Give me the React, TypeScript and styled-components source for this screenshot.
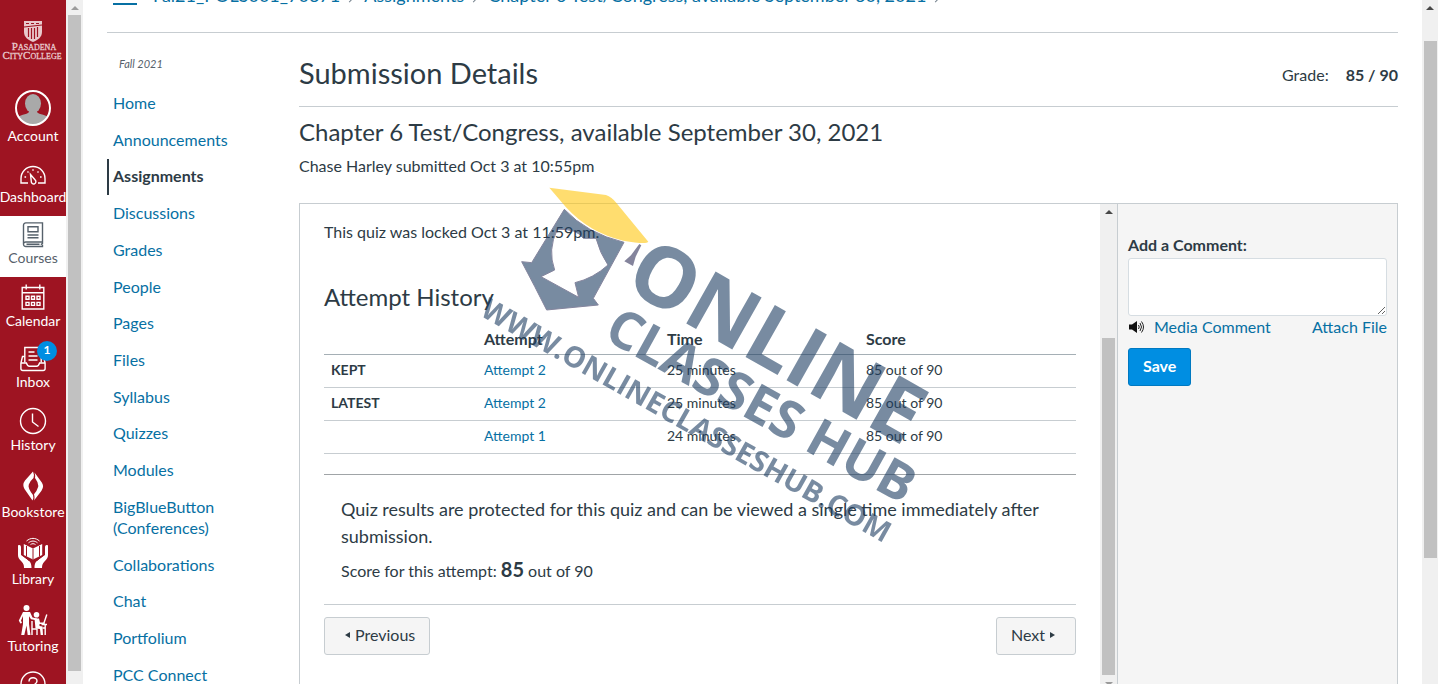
import React from 'react';
import styled, { createGlobalStyle, css } from 'styled-components';

const ink = '#2d3b45';
const link = '#0770a3';
const rule = '#c7cdd1';
const crimson = '#9e1422';

const GlobalStyle = createGlobalStyle`
  *, *::before, *::after { box-sizing: border-box; }
  body {
    margin: 0;
    background: #fff;
    color: ${ink};
    font-family: Lato, "Open Sans", sans-serif;
    font-size: 16px;
    line-height: 24px;
  }
  h1, h2, h3, p { margin: 0; font-weight: 400; }
  a { color: ${link}; text-decoration: none; }
`;

const Page = styled.div`
  position: relative;
  display: flex;
  height: 100vh;
  overflow: hidden;
`;

/* ---------- Scrollbar ---------- */

const Track = styled.div<{ $width: number }>`
  display: flex;
  flex: none;
  flex-direction: column;
  width: ${(p) => p.$width}px;
  background: #f0f0f0;
`;
const ArrowBox = styled.div<{ $down?: boolean; $dim?: boolean }>`
  display: flex;
  flex: none;
  align-items: center;
  justify-content: center;
  height: 15px;
  svg {
    fill: ${(p) => (p.$dim ? '#9b9b9b' : '#484848')};
    ${(p) => p.$down && 'rotate: 180deg;'}
  }
`;
const Gap = styled.div<{ $grow: number }>`
  flex: ${(p) => p.$grow} 1 0;
`;
const Thumb = styled(Gap)`
  width: 13px;
  margin-left: 2px;
  background: #c1c1c1;
`;

type ScrollbarProps = {
  before: number; thumb: number; after: number; width?: number; dim?: boolean; down?: boolean;
};

function Scrollbar({ before, thumb, after, width = 17, dim, down }: ScrollbarProps) {
  const arrow = (
    <svg width="8" height="4" viewBox="0 0 8 4" aria-hidden="true">
      <path d="M4 0 8 4H0Z" />
    </svg>
  );
  return (
    <Track $width={width} aria-hidden="true">
      <ArrowBox $dim={dim}>{arrow}</ArrowBox>
      <Gap $grow={before} />
      <Thumb $grow={thumb} />
      <Gap $grow={after} />
      {down && <ArrowBox $down $dim>{arrow}</ArrowBox>}
    </Track>
  );
}

/* ---------- Global navigation ---------- */

const GlobalNav = styled.nav`
  flex: none;
  width: 66px;
  background: ${crimson};
  overflow: hidden;
`;
const LogoLink = styled.a`
  display: block;
  height: 84px;
  padding-top: 18px;
  svg { display: block; fill: #e9c9cc; }
`;
const NavItem = styled.a<{ $active?: boolean }>`
  display: flex;
  flex-direction: column;
  align-items: center;
  padding: 6px 0 9px;
  color: ${(p) => (p.$active ? '#56616b' : '#fff')};
  background: ${(p) => (p.$active ? '#fff' : 'transparent')};
  font-size: 14px;
  line-height: 20px;
  white-space: nowrap;
`;
const IconSlot = styled.span<{ $height: number }>`
  position: relative;
  display: flex;
  align-items: center;
  justify-content: center;
  height: ${(p) => p.$height}px;
`;
const Badge = styled.span`
  position: absolute;
  top: -5px;
  right: -11px;
  width: 20px;
  height: 20px;
  border-radius: 50%;
  background: #008ee2;
  color: #fff;
  font-size: 12px;
  font-weight: 700;
  line-height: 18px;
  text-align: center;
`;

const lineIcon = { fill: 'none', stroke: 'currentColor', strokeWidth: 1.4 } as const;

const AccountIcon = () => (
  <svg width="36" height="36" viewBox="0 0 36 36">
    <clipPath id="avatar"><circle cx="18" cy="18" r="17" /></clipPath>
    <g clipPath="url(#avatar)" fill="#a9a9a9">
      <ellipse cx="18" cy="13.500" rx="8" ry="9.500" />
      <path d="M14 19h8v3c2 3 10 2 13 7v7H1v-7c3-5 11-4 13-7Z" />
    </g>
    <circle cx="18" cy="18" r="17" fill="none" stroke="#fff" strokeWidth="2" />
  </svg>
);
const DashboardIcon = () => (
  <svg width="26" height="26" viewBox="0 0 26 26" {...lineIcon}>
    <path d="M8 22H1v-4.500a12 12 0 0 1 24 0V22h-7" />
    <path d="m10.500 13.500 4.700 5.500a2.300 2.300 0 1 1-3.900 1.500Z" />
    <path d="M13 8.200v1.600M7.500 10.500l1 1M18.500 10.500l-1 1M4.500 16h1.600M20 16h1.600" />
  </svg>
);
const CoursesIcon = () => (
  <svg width="22" height="26" viewBox="0 0 22 26" {...lineIcon}>
    <path d="M4 .900h16.500V20H4a2.300 2.300 0 0 0-2.500 2.300V3.200A2.300 2.300 0 0 1 4 .900ZM1.500 22.300A2.300 2.300 0 0 0 4 24.500h16.500V23l-1-.800 1-.800V20M4.500 22.300h13" />
    <path d="M6 4.800h10v5H6zM5.500 13h11M5.500 15.800h11" />
  </svg>
);
const CalendarIcon = () => (
  <svg width="24" height="28" viewBox="0 0 24 28" {...lineIcon}>
    <path d="M1.200 4.500h21.600V26H1.200zM1.200 9.800h21.600M5.200 1.500v5M18.800 1.500v5" />
    <path d="M5 13.200h3v3H5zM10.500 13.200h3v3h-3zM16 13.200h3v3h-3zM5 19.400h3v3H5zM10.500 19.400h3v3h-3zM16 19.400h3v3h-3z" />
  </svg>
);
const InboxIcon = () => (
  <svg width="26" height="26" viewBox="0 0 26 26" {...lineIcon}>
    <path d="M4.800 16.500V1.500h16.400v15" />
    <path d="M4.800 10.500H2.500L.900 17v5.500c0 1 .800 2 2 2h20.200c1.200 0 2-1 2-2V17l-1.600-6.500h-2.300M.900 17h5.500c.600 2 1.500 3.200 3 3.200h7.200c1.500 0 2.400-1.200 3-3.200h5.500" />
    <path d="M8.500 6h6M8.500 10h9M8.500 14h9" />
  </svg>
);
const HistoryIcon = () => (
  <svg width="28" height="28" viewBox="0 0 28 28" {...lineIcon}>
    <circle cx="14" cy="14" r="12.500" />
    <path d="M13.500 6.500V15l6 4.500" />
  </svg>
);
const BookstoreIcon = () => (
  <svg width="22" height="32" viewBox="0 0 22 32" fill="#fff">
    <path d="M11 1.500 3 10.500Q0 14.500 2.500 19L10.500 30.500Q12 28 11 25 5.500 18 6.800 14.500 8 11 11.500 8 12.500 4.500 11 1.500Z" />
    <path d="M12.500 2.500Q13.500 5 13 8 16.800 13 16.200 16.800 15 21 12 24.200 13 28 12 30.500L19.500 20.800Q22.500 16.500 19.800 12.500Z" />
  </svg>
);
const LibraryIcon = () => (
  <svg width="32" height="32" viewBox="0 0 32 32">
    <g fill="#fff">
      <path d="M16 11.500 6.800 7v11L16 22.500 25.200 18V7Z" />
      <path d="M1 8.500c2-1 3 0 3 2v7.500l6.500 4.500c3 2.500 4 4 4 8.500H7c0-3-.500-4.500-2.500-6.500C2 22 1 20.500 1 18Z" />
      <path d="M31 8.500c-2-1-3 0-3 2v7.500l-6.500 4.500c-3 2.500-4 4-4 8.500H25c0-3 .500-4.500 2.500-6.500C30 22 31 20.500 31 18Z" />
    </g>
    <path d="M16 11.500v11M9.500 9v10.500M22.500 9v10.500M4.500 17.500l7.500 6M27.500 17.500l-7.500 6" stroke={crimson} fill="none" />
    <path d="M9.500 4c4-3.500 9-3.500 13 0M11.500 5.800c3-2.300 6-2.300 9 0M13.500 7.600c1.500-1.200 3.500-1.200 5 0" stroke="#fff" strokeWidth="1" fill="none" />
  </svg>
);
const TutoringIcon = () => (
  <svg width="30" height="32" viewBox="0 0 30 32" fill="#fff">
    <circle cx="8.500" cy="4" r="3" />
    <path d="M5 8h7l2.500 5.500 4.500 1-.500 1.700-5.500-1-2-3V20l1.500 11H9.700L8.500 21.500 6.300 31H3.200L5 20v-8l-2 4.500 1 2.500-1.700.500L.800 16.500Z" />
    <circle cx="18.500" cy="10.800" r="2.800" />
    <path d="M16.500 14.500h4.500l1 4h4.500V20h-5v2l3 .500.500 8.500h-2.300l-.700-6-4.500-.500Z" />
    <path d="M14 17v8h5v6M14 25v6M23.500 20.500h5.500M27.200 20.500V31M24.500 24h3M25.800 19.500l3-9" stroke="#fff" strokeWidth="1.400" fill="none" />
  </svg>
);
const HelpIcon = () => (
  <svg width="26" height="26" viewBox="0 0 26 26" {...lineIcon}>
    <circle cx="13" cy="13" r="12" />
    <path d="M9 10.500C9 5.500 17 5.500 17 10c0 3-4 3-4 6.500M13 18.500v1.500" />
  </svg>
);

const globalItems = [
  { label: 'Account', height: 36, icon: <AccountIcon /> },
  { label: 'Dashboard', height: 26, icon: <DashboardIcon /> },
  { label: 'Courses', height: 26, icon: <CoursesIcon />, active: true },
  { label: 'Calendar', height: 28, icon: <CalendarIcon /> },
  { label: 'Inbox', height: 26, icon: <InboxIcon />, badge: 1 },
  { label: 'History', height: 28, icon: <HistoryIcon /> },
  { label: 'Bookstore', height: 32, icon: <BookstoreIcon /> },
  { label: 'Library', height: 32, icon: <LibraryIcon /> },
  { label: 'Tutoring', height: 32, icon: <TutoringIcon /> },
  { label: 'Help', height: 26, icon: <HelpIcon /> },
];

const CollegeLogo = () => (
  <svg width="66" height="46" viewBox="0 0 66 46" fontFamily="'Liberation Serif', serif">
    <path d="M24 3h18v11c0 5-4 8-9 10-5-2-9-5-9-10Z" />
    <path d="M24 9l18-2M28.500 10v9M31.500 10v11M34.500 10v11M37.500 9v10M26 5.500h3M31 5.500h3M36 5.500h3" stroke={crimson} strokeWidth="1.200" />
    <g stroke="#e9c9cc" strokeWidth="0.3">
      <text x="34" y="32" textAnchor="middle" fontSize="8"><tspan fontSize="11">P</tspan>ASADENA</text>
      <text x="32" y="41" textAnchor="middle" fontSize="8"><tspan fontSize="11">C</tspan>ITY<tspan fontSize="11">C</tspan>OLLEGE</text>
    </g>
  </svg>
);

/* ---------- Course area ---------- */

const Main = styled.main`
  display: flex;
  flex: 1;
  flex-direction: column;
  min-width: 0;
  padding: 0 24px;
`;
const Breadcrumbs = styled.nav`
  display: flex;
  flex: none;
  align-items: center;
  height: 73px;
  margin-top: -40px;
  padding: 0 6px 2px;
  border-bottom: 1px solid ${rule};
  font-size: 18px;
  white-space: nowrap;
`;
const MenuButton = styled.button`
  width: 24px;
  height: 20px;
  margin-right: 16px;
  padding: 0;
  border: solid #0770a3;
  border-width: 2px 0;
  background: none;
`;
const Chevron = styled.span`
  width: 7px;
  height: 7px;
  margin: 4px 11px 0 6px;
  border: solid #73818c;
  border-width: 1px 1px 0 0;
  rotate: 45deg;
`;
const Columns = styled.div`
  display: flex;
  flex: 1;
  min-height: 0;
`;
const CourseNav = styled.nav`
  flex: none;
  width: 192px;
`;
const Term = styled.p`
  padding: 21px 12px 12px;
  color: #56616b;
  font-size: 11px;
  font-style: italic;
  line-height: 20px;
`;
const CourseLinks = styled.ul`
  display: flex;
  flex-direction: column;
  justify-content: space-between;
  height: 608px;
  margin: 0;
  padding: 0;
  list-style: none;
`;
const CourseLink = styled.a<{ $active?: boolean }>`
  display: block;
  width: 144px;
  padding: 6px 0 9px 6px;
  line-height: 21px;
  ${(p) => p.$active && css`
    padding-left: 4px;
    border-left: 2px solid ${ink};
    color: ${ink};
    font-weight: 700;
  `}
`;
const courseLinks = [
  'Home', 'Announcements', 'Assignments', 'Discussions', 'Grades', 'People', 'Pages', 'Files', 'Syllabus',
  'Quizzes', 'Modules', 'BigBlueButton (Conferences)', 'Collaborations', 'Chat', 'Portfolium', 'PCC Connect',
];

const Content = styled.div`
  display: flex;
  flex: 1;
  flex-direction: column;
  min-width: 0;
`;
const TitleRow = styled.header`
  display: flex;
  align-items: flex-end;
  justify-content: space-between;
  padding: 22px 0 15px;
  border-bottom: 1px solid ${rule};
`;
const Title = styled.h1`
  font-size: 29px;
  line-height: 36px;
`;
const Grade = styled.div`
  display: flex;
  gap: 17px;
  padding-bottom: 4px;
`;
const Heading = styled.h2`
  font-size: 24px;
  line-height: 30px;
`;
const Intro = styled.section`
  display: flex;
  flex-direction: column;
  gap: 7px;
  padding: 10px 0 25px;
`;
const Panel = styled.section`
  display: flex;
  flex: 1;
  min-height: 0;
  margin-bottom: -8px;
  border: 1px solid ${rule};
`;
const Preview = styled.div`
  flex: 1;
  min-width: 0;
  padding: 16px 24px;
`;
const HistoryHeading = styled(Heading)`
  margin-top: 38px;
`;
const AttemptTable = styled.table`
  width: 100%;
  margin-top: 12px;
  border-collapse: collapse;
  table-layout: fixed;
  font-size: 14px;
  line-height: 20px;
  text-align: left;
  th, td { height: 33px; padding: 0 7px 2px; border-bottom: 1px solid ${rule}; }
  thead th { height: 30px; padding-bottom: 0; border-color: #a5afb5; font-size: 16px; }
`;
const Column = styled.col<{ $width?: number }>`
  ${(p) => p.$width && `width: ${p.$width}px;`}
`;
const Results = styled.div`
  margin-top: 20px;
  padding: 21px 17px;
  border-top: 1px solid #a0a4a7;
  border-bottom: 1px solid ${rule};
`;
const Notice = styled.p`
  font-size: 18px;
  line-height: 27px;
`;
const Score = styled.p`
  margin-top: 7px;
  strong { font-size: 20px; }
`;
const Pager = styled.div`
  display: flex;
  justify-content: space-between;
  padding-top: 12px;
`;
const Button = styled.button<{ $primary?: boolean }>`
  display: inline-flex;
  align-items: center;
  gap: 5px;
  height: 38px;
  padding: 0 14px 2px;
  border: 1px solid ${(p) => (p.$primary ? '#0079c1' : rule)};
  border-radius: 3px;
  background: ${(p) => (p.$primary ? '#008ee2' : '#f5f5f5')};
  color: ${(p) => (p.$primary ? '#fff' : ink)};
  font: inherit;
  font-weight: ${(p) => (p.$primary ? 700 : 400)};
`;
const PreviousButton = styled(Button)`
  padding-left: 20px;
`;
const NextButton = styled(Button)`
  padding-right: 20px;
`;

const CommentPane = styled.form`
  display: flex;
  flex: none;
  flex-direction: column;
  align-items: flex-start;
  width: 280px;
  padding: 29px 10px;
  border-left: 1px solid ${rule};
  background: #f5f5f5;
`;
const CommentLabel = styled.label`
  font-weight: 700;
`;
const CommentBox = styled.textarea`
  width: 100%;
  height: 58px;
  margin: 1px 0 0;
  border: 1px solid #d6dde2;
  border-radius: 3px;
  background: #fff;
  font: inherit;
`;
const CommentLinks = styled.div`
  display: flex;
  justify-content: space-between;
  width: 100%;
  margin: -1px 0 9px;
`;
const MediaLink = styled.a`
  display: flex;
  align-items: center;
  gap: 9px;
`;

const Watermark = styled.svg`
  position: absolute;
  top: 180px;
  left: 470px;
  opacity: 0.6;
  pointer-events: none;
  filter: blur(0.5px);
  font-family: "Open Sans", sans-serif;
  font-weight: 700;
  text-rendering: geometricPrecision;
`;

const attempts = [
  { status: 'KEPT', name: 'Attempt 2', time: '25 minutes', score: '85 out of 90' },
  { status: 'LATEST', name: 'Attempt 2', time: '25 minutes', score: '85 out of 90' },
  { status: '', name: 'Attempt 1', time: '24 minutes', score: '85 out of 90' },
];

export default function App() {
  return (
    <Page>
      <GlobalStyle />
      <GlobalNav aria-label="Global">
        <LogoLink href="#" aria-label="Pasadena City College"><CollegeLogo /></LogoLink>
        {globalItems.map((item) => (
          <NavItem key={item.label} href="#" $active={item.active}>
            <IconSlot $height={item.height}>
              {item.icon}
              {item.badge && <Badge>{item.badge}</Badge>}
            </IconSlot>
            {item.label}
          </NavItem>
        ))}
      </GlobalNav>
      <Scrollbar before={0} thumb={656} after={13} dim />

      <Main>
        <Breadcrumbs aria-label="Breadcrumb">
          <MenuButton aria-label="Course menu" />
          <a href="#">Fal21_POLS001_70371</a><Chevron />
          <a href="#">Assignments</a><Chevron />
          <a href="#">Chapter 6 Test/Congress, available September 30, 2021</a><Chevron />
        </Breadcrumbs>
        <Columns>
          <CourseNav aria-label="Course">
            <Term>Fall 2021</Term>
            <CourseLinks>
              {courseLinks.map((name) => (
                <li key={name}><CourseLink href="#" $active={name === 'Assignments'}>{name}</CourseLink></li>
              ))}
            </CourseLinks>
          </CourseNav>

          <Content>
            <TitleRow>
              <Title>Submission Details</Title>
              <Grade><span>Grade:</span><strong>85 / 90</strong></Grade>
            </TitleRow>
            <Intro>
              <Heading>Chapter 6 Test/Congress, available September 30, 2021</Heading>
              <p>Chase Harley submitted Oct 3 at 10:55pm</p>
            </Intro>
            <Panel>
              <Preview>
                <p>This quiz was locked Oct 3 at 11:59pm.</p>
                <HistoryHeading as="h3">Attempt History</HistoryHeading>
                <AttemptTable>
                  <colgroup>
                    <Column $width={153} /><Column $width={183} /><Column $width={199} /><Column />
                  </colgroup>
                  <thead>
                    <tr><th aria-label="Status" /><th>Attempt</th><th>Time</th><th>Score</th></tr>
                  </thead>
                  <tbody>
                    {attempts.map((a, i) => (
                      <tr key={i}>
                        <th scope="row">{a.status}</th>
                        <td><a href="#">{a.name}</a></td>
                        <td>{a.time}</td>
                        <td>{a.score}</td>
                      </tr>
                    ))}
                  </tbody>
                </AttemptTable>
                <Results>
                  <Notice>Quiz results are protected for this quiz and can be viewed a single time immediately after submission.</Notice>
                  <Score>Score for this attempt: <strong>85</strong> out of 90</Score>
                </Results>
                <Pager>
                  <PreviousButton>
                    <svg width="5" height="6" viewBox="0 0 5 6" fill={ink}><path d="M5 0v6L0 3Z" /></svg>
                    Previous
                  </PreviousButton>
                  <NextButton>
                    Next
                    <svg width="5" height="6" viewBox="0 0 5 6" fill={ink}><path d="M0 0v6l5-3Z" /></svg>
                  </NextButton>
                </Pager>
              </Preview>
              <Scrollbar before={119} thumb={338} after={1} down />
              <CommentPane>
                <CommentLabel htmlFor="comment">Add a Comment:</CommentLabel>
                <CommentBox id="comment" />
                <CommentLinks>
                  <MediaLink href="#">
                    <svg width="17" height="14" viewBox="0 0 17 14">
                      <path d="M1 4.500h3L9 1v12L4 9.500H1Z" fill="#111" />
                      <path d="M10.500 5q1.500 2 0 4M12 3q3 4 0 8M13.500 1.500q4 5.500 0 11" fill="none" stroke="#222" />
                    </svg>
                    Media Comment
                  </MediaLink>
                  <a href="#">Attach File</a>
                </CommentLinks>
                <Button type="button" $primary>Save</Button>
              </CommentPane>
            </Panel>
          </Content>
        </Columns>
      </Main>
      <Scrollbar before={26} thumb={517} after={126} width={16} />

      <Watermark width="480" height="370" viewBox="470 180 480 370">
        <g transform="translate(470 170) scale(.3333)">
          <path
            fillRule="evenodd"
            fill="#1f3f63"
            stroke="#33335c"
            strokeWidth="3"
            d="M283 118 185 278 155 275Q195 350 230 420L385 405 370 385 462 217Q350 190 283 118ZM262 178Q320 175 340 205L378 205Q390 250 414 285 370 325 315 338L326 382 213 320 254 300Q232 240 262 178Z"
          />
          <path fill="#ffc811" d="M238 53 408 75Q425 80 440 100L535 215Q530 224 460 212 360 190 288 112Z" />
          <path fill="#33335c" d="m508 222 6 4-17 34-8 28-26-14 20-18Z" />
        </g>
        <g fill="#1f3f63">
          <text transform="translate(622 287) rotate(29.5)" fontSize="83.500">ONLINE</text>
          <text transform="translate(602 338) rotate(29)" fontSize="52.500">CLASSES HUB</text>
          <text transform="translate(479 315) rotate(29.4)" fontSize="29">WWW.ONLINECLASSESHUB.COM</text>
        </g>
      </Watermark>
    </Page>
  );
}
